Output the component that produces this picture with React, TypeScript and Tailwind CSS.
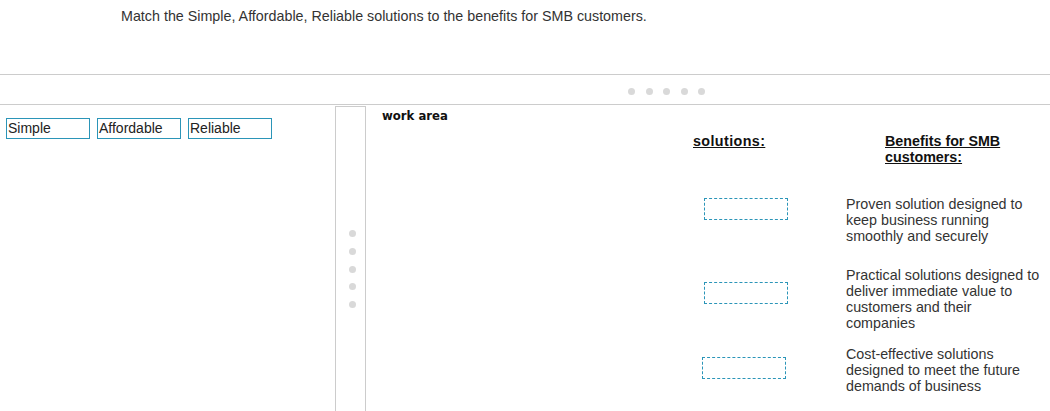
const chips = ['Simple', 'Affordable', 'Reliable'];

const benefits = [
  { text: 'Proven solution designed to keep business running smoothly and securely', boxTop: 'mt-[2px]', rowTop: 'mt-[31px]', boxLeft: 'ml-[338px]', textLeft: 'ml-[58px]' },
  { text: 'Practical solutions designed to deliver immediate value to customers and their companies', boxTop: 'mt-[15px]', rowTop: 'mt-[23px]', boxLeft: 'ml-[338px]', textLeft: 'ml-[58px]' },
  { text: 'Cost-effective solutions designed to meet the future demands of business', boxTop: 'mt-[11px]', rowTop: 'mt-[15px]', boxLeft: 'ml-[336px]', textLeft: 'ml-[60px]' },
];

function Dot() {
  return <div className="w-[7px] h-[7px] rounded-full bg-[#d9d9d9]" />;
}

export default function App() {
  return (
    <div className="w-[1050px] h-[411px] overflow-hidden bg-white text-[#333] font-['Liberation_Sans',Arial,sans-serif] text-[14.3px] leading-[16px]">
      {/* question */}
      <div className="h-[74px] pl-[121px] pt-[8px]">
        Match the Simple, Affordable, Reliable solutions to the benefits for SMB customers.
      </div>

      {/* horizontal splitter */}
      <div className="h-[31px] border-y border-[#cccccc] flex items-center pl-[628px] pt-[3px]">
        <div className="flex gap-[10.6px]">
          <Dot />
          <Dot />
          <Dot />
          <Dot />
          <Dot />
        </div>
      </div>

      <div className="flex h-[306px]">
        {/* answer pool */}
        <div className="w-[335px] pl-[6px] pt-[13px]">
          <div className="flex gap-[7px]">
            {chips.map((c) => (
              <div
                key={c}
                className="w-[84px] h-[21px] border border-[#2b95b8] pl-[1px] leading-[18px] text-[#222] text-[14px]"
              >
                {c}
              </div>
            ))}
          </div>
        </div>

        {/* vertical splitter */}
        <div className="w-[31px] mt-[1px] border-x border-t border-[#cccccc] flex flex-col items-center pl-[3px] pt-[123px] gap-[10.75px]">
          <Dot />
          <Dot />
          <Dot />
          <Dot />
          <Dot />
        </div>

        {/* work area */}
        <div className="flex-1">
          <div className="pl-[16px] pt-[3px] font-['DejaVu_Sans',sans-serif] font-bold text-[11.7px] text-[#111]">
            work area
          </div>
          <div className="flex mt-[9px] font-bold underline text-[#111]">
            <div className="ml-[327px] w-[192px] tracking-[0.4px]">solutions:</div>
            <div className="w-[130px]">Benefits for SMB customers:</div>
          </div>
          {benefits.map((b) => (
            <div key={b.text} className={`flex items-start ${b.rowTop}`}>
              <div
                className={`${b.boxLeft} ${b.boxTop} w-[84px] h-[22px] border border-dashed border-[#2b95b8] shrink-0`}
              />
              <div className={`${b.textLeft} w-[194px]`}>{b.text}</div>
            </div>
          ))}
        </div>
      </div>
    </div>
  );
}
